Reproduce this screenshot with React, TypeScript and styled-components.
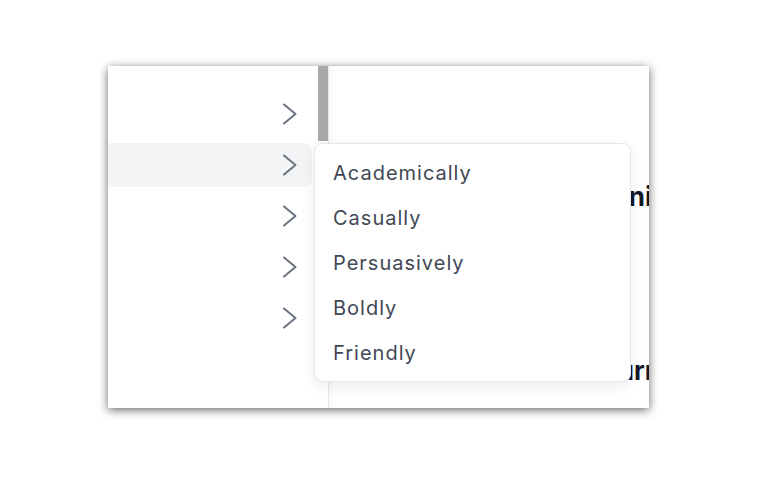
import styled, { createGlobalStyle } from 'styled-components';

const GlobalStyle = createGlobalStyle`
  * { box-sizing: border-box; }
  body {
    margin: 0;
    background: #ffffff;
    font-family: Inter, "Noto Sans", "Liberation Sans", sans-serif;
  }
`;

const tones = ['Academically', 'Casually', 'Persuasively', 'Boldly', 'Friendly'];
const rows = [0, 1, 2, 3, 4];

function Chevron() {
  return (
    <svg width="16" height="24" viewBox="0 0 16 24" fill="none" aria-hidden="true">
      <polyline
        points="2,2.5 13.5,12 2,21.5"
        stroke="#6b7280"
        strokeWidth="2"
        strokeLinecap="round"
        strokeLinejoin="round"
      />
    </svg>
  );
}

export default function App() {
  return (
    <>
      <GlobalStyle />
      <Page>
        <Frame>
          <Sidebar>
            <List>
              {rows.map((i) => (
                <Row key={i} $active={i === 1}>
                  <Chevron />
                </Row>
              ))}
            </List>
            <Scrollbar>
              <Thumb />
            </Scrollbar>
          </Sidebar>

          <Content>
            <Heading $top={115} $overhang={3}>Ask Gemini</Heading>
            <Heading $top={142} $overhang={12}>Your turn</Heading>
          </Content>

          <Menu role="menu">
            {tones.map((tone) => (
              <MenuItem key={tone} role="menuitem">
                {tone}
              </MenuItem>
            ))}
          </Menu>
        </Frame>
      </Page>
    </>
  );
}

const Page = styled.div`
  padding: 66px 0 0 108px;
  height: 480px;
`;

const Frame = styled.div`
  position: relative;
  width: 541px;
  height: 342px;
  display: flex;
  background: #ffffff;
  box-shadow: 0 2px 9px rgba(0, 0, 0, 0.6);
  overflow: hidden;
`;

const Sidebar = styled.aside`
  width: 221px;
  flex-shrink: 0;
  display: flex;
  border-right: 1px solid #e5e7eb;
`;

const List = styled.div`
  flex: 1;
  display: flex;
  flex-direction: column;
  gap: 7px;
  padding: 26px 6px 0 0;
`;

const Row = styled.div<{ $active?: boolean }>`
  height: 44px;
  display: flex;
  align-items: center;
  justify-content: flex-end;
  padding-right: 14px;
  border-radius: 0 8px 8px 0;
  background: ${(p) => (p.$active ? '#f3f4f6' : 'transparent')};
`;

const Scrollbar = styled.div`
  width: 10px;
  flex-shrink: 0;
`;

const Thumb = styled.div`
  height: 75px;
  background: #a9a9a9;
`;

const Content = styled.main`
  flex: 1;
  min-width: 0;
  display: flex;
  flex-direction: column;
  padding-left: 21px;
  box-shadow: inset 8px 0 10px -8px rgba(0, 0, 0, 0.06);
`;

const Heading = styled.h2<{ $top: number; $overhang: number }>`
  margin: ${(p) => p.$top}px -${(p) => p.$overhang}px 0 0;
  font-size: 26px;
  font-weight: 700;
  line-height: 32px;
  color: #111827;
  white-space: nowrap;
  text-align: right;
`;

const Menu = styled.div`
  position: absolute;
  left: 206px;
  top: 77px;
  width: 317px;
  padding: 6px 0;
  background: #ffffff;
  border: 1px solid #e5e7eb;
  border-radius: 8px;
  box-shadow: 0 4px 14px rgba(0, 0, 0, 0.08);
`;

const MenuItem = styled.div`
  height: 45px;
  display: flex;
  align-items: center;
  padding-left: 18px;
  font-size: 20px;
  letter-spacing: 1px;
  color: #414855;
`;
